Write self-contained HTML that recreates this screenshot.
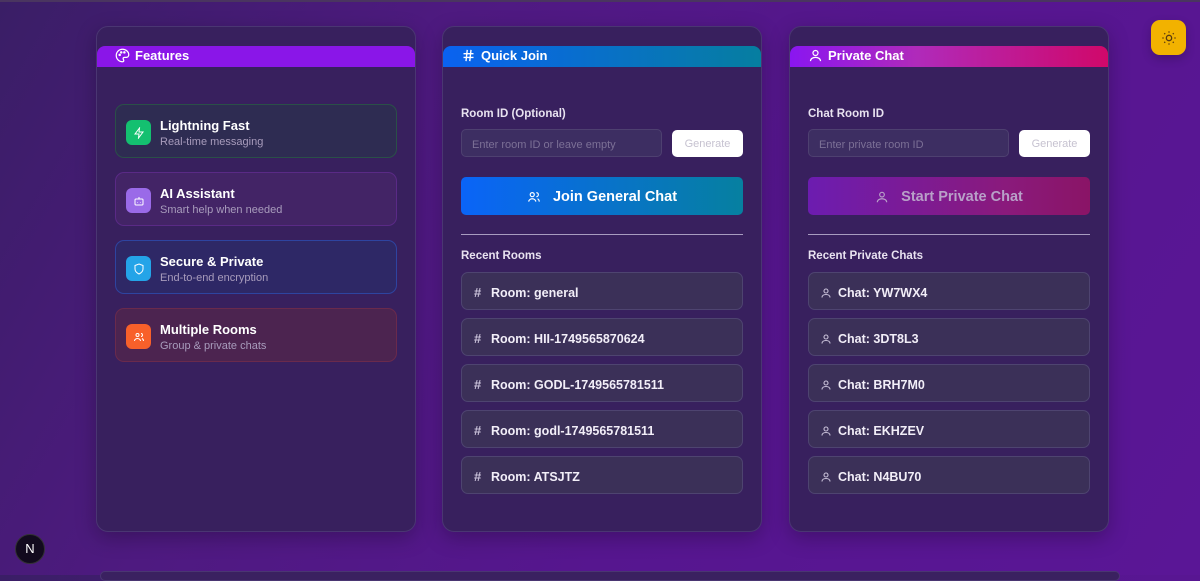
<!DOCTYPE html><html><head><style>
*{box-sizing:border-box;margin:0;padding:0}
body{width:1200px;height:575px;overflow:hidden;position:relative;font-family:"Liberation Sans",sans-serif;background:linear-gradient(120deg,#3a1e66 0%,#4e1a80 30%,#56168f 60%,#5a1696 100%);color:#fff}
.topline{position:absolute;left:0;top:0;width:1200px;height:2px;background:#4a3560}
.card{position:absolute;top:26px;width:320px;height:506px;background:#38205e;border:1px solid #4a3672;border-radius:12px;overflow:hidden;box-shadow:0 6px 20px rgba(0,0,0,.25)}
.hdr{position:absolute;left:0;top:19px;width:100%;height:21px;border-radius:8px 8px 0 0;font-weight:bold;font-size:13px;line-height:19px;padding-left:38px}
.hdr svg{position:absolute;left:18px;top:2px}
.feat{position:absolute;left:18px;width:282px;height:54px;border-radius:9px;border:1px solid}
.feat .ic{position:absolute;left:10px;top:15px;width:25px;height:25px;border-radius:6px;display:flex;align-items:center;justify-content:center}
.feat b{position:absolute;left:44px;top:13px;font-size:13px}
.feat span{position:absolute;left:44px;top:31px;font-size:11px;color:#a89cbc}
.lbl{position:absolute;left:18px;top:81px;font-size:11.5px;font-weight:bold;color:#e8e2f0}
.inp{position:absolute;left:18px;top:102px;width:201px;height:28px;border:1px solid #4e4070;background:#3d2e62;border-radius:5px;font-size:11px;color:#7c7096;line-height:31px;padding-left:10px}
.gen{position:absolute;left:229px;top:103px;width:71px;height:27px;background:#fff;border-radius:5px;font-size:11px;color:#c6c2d0;text-align:center;line-height:29px}
.btn{position:absolute;left:18px;top:150px;width:282px;height:38px;border-radius:5px;font-size:14.5px;font-weight:bold;display:flex;align-items:center;justify-content:center;gap:12px;padding-top:2px}
.hr{position:absolute;left:18px;top:207px;width:282px;height:1px;background:#a89cc0}
.rl{position:absolute;left:18px;top:223px;font-size:11.5px;font-weight:bold;color:#e8e2f0}
.item{position:absolute;left:18px;width:282px;height:38px;background:#3b3058;border:1px solid #4e4470;border-radius:7px;font-size:12.5px;font-weight:bold;line-height:40px;padding-left:29px;color:#f2eef8}
.item i{position:absolute;left:12px;font-style:normal;color:#c8c0d8;font-size:13px}
.item svg{position:absolute;left:11px;top:14px}
</style></head><body>
<div class="topline"></div>
<div class="card" style="left:96px">
 <div class="hdr" style="background:#8a16e8"><svg width="15" height="15" viewBox="0 0 24 24" fill="none" stroke="#fff" stroke-width="2"><path d="M12 2a10 10 0 0 0 0 20c1.5 0 2-1 2-2 0-1.5-1-1.5-1-3s1-2 2.5-2H18a4 4 0 0 0 4-4c0-5-4.5-9-10-9z"/><circle cx="7.5" cy="11" r="1"/><circle cx="10" cy="7" r="1"/><circle cx="15" cy="7" r="1"/></svg>Features</div>
 <div class="feat" style="top:77px;background:#2e2c52;border-color:#2a5048"><div class="ic" style="background:#14c070"><svg width="12" height="12" viewBox="0 0 24 24" fill="none" stroke="#fff" stroke-width="2"><path d="M13 2L4 14h8l-1 8 9-12h-8z"/></svg></div><b>Lightning Fast</b><span>Real-time messaging</span></div>
 <div class="feat" style="top:145px;background:#432466;border-color:#5a2a86"><div class="ic" style="background:#9a6ae8"><svg width="12" height="12" viewBox="0 0 24 24" fill="none" stroke="#fff" stroke-width="2"><rect x="4" y="8" width="16" height="12" rx="2"/><path d="M12 8V4M9 14v1M15 14v1"/></svg></div><b>AI Assistant</b><span>Smart help when needed</span></div>
 <div class="feat" style="top:213px;background:#2e2866;border-color:#2e44a0"><div class="ic" style="background:#24a4e8"><svg width="12" height="12" viewBox="0 0 24 24" fill="none" stroke="#fff" stroke-width="2"><path d="M12 2l8 3v7c0 5-4 8-8 10-4-2-8-5-8-10V5z"/></svg></div><b>Secure &amp; Private</b><span>End-to-end encryption</span></div>
 <div class="feat" style="top:281px;background:#4c2450;border-color:#6a2a4c"><div class="ic" style="background:#f8602a"><svg width="12" height="12" viewBox="0 0 24 24" fill="none" stroke="#fff" stroke-width="2"><circle cx="9" cy="8" r="3"/><path d="M3 20c0-3 3-5 6-5s6 2 6 5M16 5a3 3 0 0 1 0 6M21 20c0-2-1-4-3-5"/></svg></div><b>Multiple Rooms</b><span>Group &amp; private chats</span></div>
</div>
<div class="card" style="left:442px">
 <div class="hdr" style="background:linear-gradient(90deg,#0a62f0,#067ea0)"><svg width="15" height="15" viewBox="0 0 24 24" fill="none" stroke="#fff" stroke-width="2.2"><path d="M4 9h16M4 15h16M10 3L8 21M16 3l-2 18"/></svg>Quick Join</div>
 <div class="lbl">Room ID (Optional)</div>
 <div class="inp">Enter room ID or leave empty</div><div class="gen">Generate</div>
 <div class="btn" style="background:linear-gradient(90deg,#0a64f8,#0680a0)"><svg width="14" height="14" viewBox="0 0 24 24" fill="none" stroke="#fff" stroke-width="2"><circle cx="9" cy="8" r="3.5"/><path d="M3 20c0-3 3-5 6-5s6 2 6 5M16 4.5a3.5 3.5 0 0 1 0 7M21 20c0-2-1-4-3-5"/></svg>Join General Chat</div>
 <div class="hr"></div><div class="rl">Recent Rooms</div>
 <div class="item" style="top:245px"><i>#</i>Room: general</div>
 <div class="item" style="top:291px"><i>#</i>Room: HII-1749565870624</div>
 <div class="item" style="top:337px"><i>#</i>Room: GODL-1749565781511</div>
 <div class="item" style="top:383px"><i>#</i>Room: godl-1749565781511</div>
 <div class="item" style="top:429px"><i>#</i>Room: ATSJTZ</div>
</div>
<div class="card" style="left:789px">
 <div class="hdr" style="background:linear-gradient(90deg,#8a16f0,#b02aba 40%,#d0086a)"><svg width="15" height="15" viewBox="0 0 24 24" fill="none" stroke="#fff" stroke-width="2"><circle cx="12" cy="8" r="4"/><path d="M4 21c0-4 4-6 8-6s8 2 8 6"/></svg>Private Chat</div>
 <div class="lbl">Chat Room ID</div>
 <div class="inp">Enter private room ID</div><div class="gen">Generate</div>
 <div class="btn" style="background:linear-gradient(90deg,#6c1cb0,#8a1a7c 70%,#8a1466);color:#b8a0c8"><svg width="14" height="14" viewBox="0 0 24 24" fill="none" stroke="#b8a0c8" stroke-width="2"><circle cx="12" cy="8" r="4"/><path d="M4 21c0-4 4-6 8-6s8 2 8 6"/></svg>Start Private Chat</div>
 <div class="hr"></div><div class="rl">Recent Private Chats</div>
 <div class="item" style="top:245px"><svg width="12" height="12" viewBox="0 0 24 24" fill="none" stroke="#c8c0d8" stroke-width="2.2"><circle cx="12" cy="8" r="4"/><path d="M4 21c0-4 4-6 8-6s8 2 8 6"/></svg>Chat: YW7WX4</div>
 <div class="item" style="top:291px"><svg width="12" height="12" viewBox="0 0 24 24" fill="none" stroke="#c8c0d8" stroke-width="2.2"><circle cx="12" cy="8" r="4"/><path d="M4 21c0-4 4-6 8-6s8 2 8 6"/></svg>Chat: 3DT8L3</div>
 <div class="item" style="top:337px"><svg width="12" height="12" viewBox="0 0 24 24" fill="none" stroke="#c8c0d8" stroke-width="2.2"><circle cx="12" cy="8" r="4"/><path d="M4 21c0-4 4-6 8-6s8 2 8 6"/></svg>Chat: BRH7M0</div>
 <div class="item" style="top:383px"><svg width="12" height="12" viewBox="0 0 24 24" fill="none" stroke="#c8c0d8" stroke-width="2.2"><circle cx="12" cy="8" r="4"/><path d="M4 21c0-4 4-6 8-6s8 2 8 6"/></svg>Chat: EKHZEV</div>
 <div class="item" style="top:429px"><svg width="12" height="12" viewBox="0 0 24 24" fill="none" stroke="#c8c0d8" stroke-width="2.2"><circle cx="12" cy="8" r="4"/><path d="M4 21c0-4 4-6 8-6s8 2 8 6"/></svg>Chat: N4BU70</div>
</div>
<div style="position:absolute;left:1151px;top:20px;width:35px;height:35px;border-radius:9px;background:#f2b200;display:flex;align-items:center;justify-content:center;box-shadow:0 4px 10px rgba(0,0,0,.2)"><svg width="16" height="16" viewBox="0 0 24 24" fill="none" stroke="#5a3a10" stroke-width="2"><circle cx="12" cy="12" r="4"/><path d="M12 2v2M12 20v2M2 12h2M20 12h2M4.9 4.9l1.4 1.4M17.7 17.7l1.4 1.4M4.9 19.1l1.4-1.4M17.7 6.3l1.4-1.4"/></svg></div>
<div style="position:absolute;left:15px;top:534px;width:30px;height:30px;border-radius:50%;background:#120a1e;border:1px solid #333;color:#fff;font-size:13px;text-align:center;line-height:28px">N</div>
<div style="position:absolute;left:100px;top:571px;width:1020px;height:10px;border-radius:8px;background:#3a2160;border:1px solid #4a3672"></div>
</body></html>
